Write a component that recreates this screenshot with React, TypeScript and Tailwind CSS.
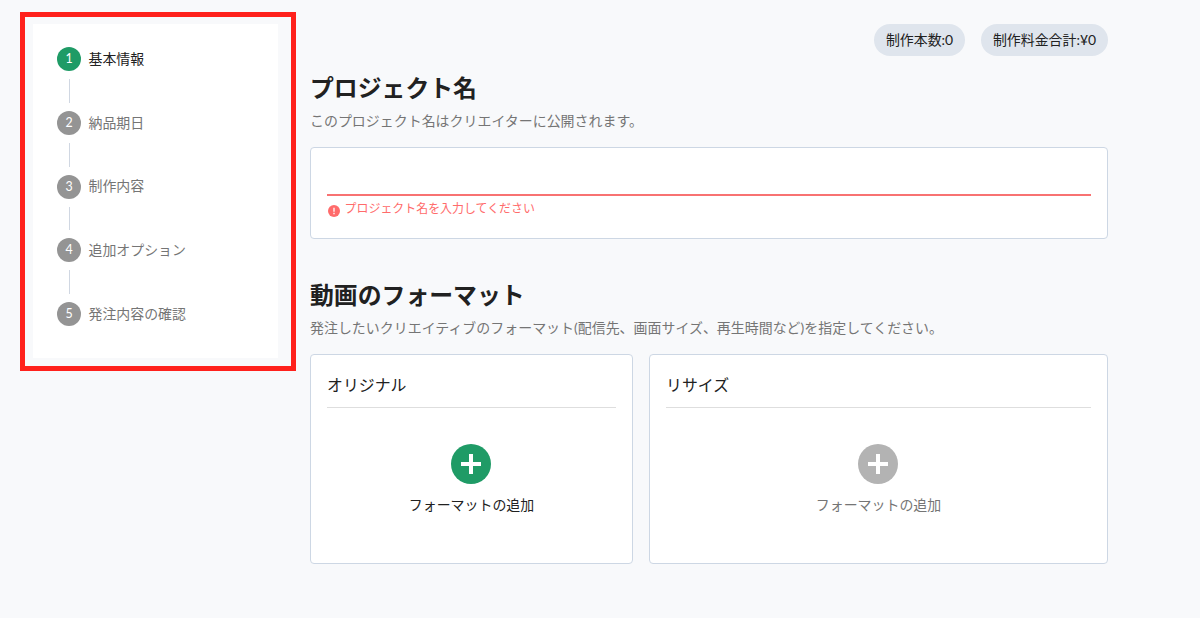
import React from "react";

const steps = ["基本情報", "納品期日", "制作内容", "追加オプション", "発注内容の確認"];

function Stepper() {
  return (
    <aside className="h-[359px] w-[276px] shrink-0 border-[5px] border-[#ff211c] pt-[7px] pl-[8px]">
      <ol className="h-[334px] w-[245px] bg-white pt-[23.4px] pl-[23.5px]">
        {steps.map((label, i) => (
          <li key={label}>
            {i > 0 && (
              <div className="my-[8px] ml-[12px] h-[23.8px] w-px bg-[#d0d7e2]" />
            )}
            <div className="flex h-[23.9px] items-center gap-[8px]">
              <svg viewBox="0 0 24 24" className="size-[24px] shrink-0">
                <circle cx="12" cy="12" r="12" fill={i === 0 ? "#1f9b66" : "#949494"} />
                <text x="12" y="16.3" textAnchor="middle" fontSize="12.4" fill="#fff">
                  {i + 1}
                </text>
              </svg>
              <span
                className={
                  "-mt-px text-[13.93px] leading-[20px] " + (i === 0 ? "text-[#212121]" : "text-[#757575]")
                }
              >
                {label}
              </span>
            </div>
          </li>
        ))}
      </ol>
    </aside>
  );
}

function Heading({ title, note }: { title: string; note: string }) {
  return (
    <>
      <h2 className="h-[36px] text-[23.85px] leading-[35px] font-bold text-[#212121]">{title}</h2>
      <p className="mt-[5px] text-[13.96px] leading-[20px] whitespace-nowrap text-[#757575]">{note}</p>
    </>
  );
}

function FormatCard({ title, active, width }: { title: string; active: boolean; width: string }) {
  return (
    <div className={"h-[210px] rounded-[4px] border border-[#cdd7e4] bg-white px-[16px] pt-[17px] " + width}>
      <h3 className="h-[36px] border-b border-[#dedede] text-[15.9px] leading-[26px] text-[#212121]">{title}</h3>
      <div className="mt-[36px] flex flex-col items-center">
        <svg viewBox="0 0 40 40" className="mr-[1.4px] size-[40px]">
          <circle cx="20" cy="20" r="20" fill={active ? "#1f9b66" : "#b3b3b3"} />
          <path d="M10 20H30M20 10V30" stroke="#fff" strokeWidth="4" />
        </svg>
        <span className={"mt-[11px] text-[13.93px] leading-[20px] " + (active ? "text-[#212121]" : "text-[#757575]")}>
          フォーマットの追加
        </span>
      </div>
    </div>
  );
}

export default function App() {
  return (
    <div
      lang="ja"
      className="flex h-[618px] w-[1200px] items-start overflow-hidden bg-[#f8f9fb] pt-[12px] pl-[20px] font-['Lato','Noto_Sans_CJK_JP',sans-serif] antialiased"
    >
      <Stepper />
      <main className="ml-[14px] w-[798px] pt-[12px]">
        <div className="flex h-[32px] justify-end gap-[16px] text-[13.93px] leading-[32px] text-[#212121]">
          <span className="w-[91px] rounded-full bg-[#dfe5ed] text-center">制作本数:0</span>
          <span className="w-[127px] rounded-full bg-[#dfe5ed] text-center">制作料金合計:¥0</span>
        </div>
        <section className="pt-[14px]">
          <Heading title="プロジェクト名" note="このプロジェクト名はクリエイターに公開されます。" />
          <div className="mt-[16px] h-[92px] rounded-[4px] border border-[#cdd7e4] bg-white px-[16px]">
            <div className="h-[48px] border-b-2 border-[#f87272]" />
            <div className="mt-[3px] flex items-center text-[11.95px] leading-[20px] text-[#ff6b6b]">
              <svg viewBox="0 0 12 12" className="mt-[3px] mr-[5px] ml-[0.6px] size-[12px]">
                <circle cx="6" cy="6" r="6" fill="#ff6b6b" />
                <path d="M6 2.8V6.7M6 7.8V9.2" stroke="#fff" strokeWidth="1.3" />
              </svg>
              プロジェクト名を入力してください
            </div>
          </div>
        </section>
        <section className="pt-[38px]">
          <Heading title="動画のフォーマット" note="発注したいクリエイティブのフォーマット(配信先、画面サイズ、再生時間など)を指定してください。" />
          <div className="mt-[16px] flex gap-[16px]">
            <FormatCard title="オリジナル" active width="w-[323px]" />
            <FormatCard title="リサイズ" active={false} width="w-[459px]" />
          </div>
        </section>
      </main>
    </div>
  );
}
